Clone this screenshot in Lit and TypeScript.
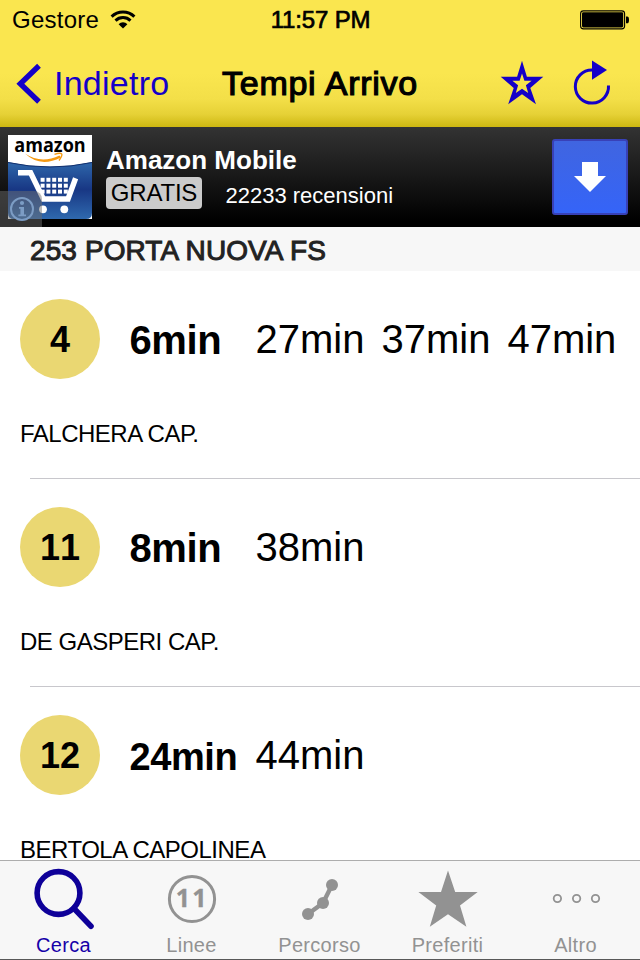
import { LitElement, html, css, svg } from "lit";
import { customElement, property } from "lit/decorators.js";
import { classMap } from "lit/directives/class-map.js";

interface Arrival {
  line: string;
  next: string;
  later: string[];
  destination: string;
}

const ARRIVALS: Arrival[] = [
  { line: "4", next: "6min", later: ["27min", "37min", "47min"], destination: "FALCHERA CAP." },
  { line: "11", next: "8min", later: ["38min"], destination: "DE GASPERI CAP." },
  { line: "12", next: "24min", later: ["44min"], destination: "BERTOLA CAPOLINEA" },
];

@customElement("status-bar")
class StatusBar extends LitElement {
  static styles = css`
    :host {
      display: grid;
      grid-template-columns: 1fr auto 1fr;
      align-items: center;
      height: 40px;
      padding: 0 11px 0 12px;
      font-size: 24px;
      line-height: 40px;
      white-space: nowrap;
    }
    .carrier { display: flex; align-items: center; gap: 10.5px; letter-spacing: 0.25px; }
    .time { -webkit-text-stroke: 0.7px #000; letter-spacing: -0.15px; }
    .battery { justify-self: end; display: block; }
    svg { display: block; }
  `;
  render() {
    return html`
      <div class="carrier">
        <span>Gestore</span>
        <svg width="26" height="20" viewBox="0 0 26 20">
          <g fill="none" stroke="#000" stroke-width="3">
            <path d="M1.6 6.6A16.3 16.3 0 0 1 24.4 6.6" />
            <path d="M5.5 10.6A10.8 10.8 0 0 1 20.5 10.6" />
          </g>
          <path d="M13 18.6L8.6 14.2A6.2 6.2 0 0 1 17.4 14.2Z" />
        </svg>
      </div>
      <div class="time">11:57 PM</div>
      <svg class="battery" width="49" height="20" viewBox="0 0 49 20">
        <rect x="0.6" y="0.9" width="44" height="18" rx="2.8" fill="none" stroke="#000" stroke-width="1.1" />
        <rect x="2" y="2.3" width="41.2" height="15.2" rx="1.4" />
        <path d="M46 6.5h1.2q1.8 0 1.8 3.4t-1.8 3.4H46z" />
      </svg>
    `;
  }
}

@customElement("nav-bar")
class NavBar extends LitElement {
  static styles = css`
    :host {
      display: grid;
      grid-template-columns: 1fr auto 1fr;
      align-items: center;
      height: 87px;
      padding: 0 28px 0 15px;
      font-size: 34px;
      line-height: 87px;
      white-space: nowrap;
    }
    .back { display: flex; align-items: center; gap: 11px; color: #1500c8; letter-spacing: 0.25px; }
    .title { -webkit-text-stroke: 1.2px #000; letter-spacing: 0.75px; padding-left: 13px; }
    .actions { display: flex; justify-content: flex-end; align-items: center; gap: 28px; padding-bottom: 2px; }
    svg { display: block; }
  `;
  render() {
    return html`
      <div class="back">
        <svg width="28" height="42" viewBox="15 62.5 28 42">
          <path d="M39 65.3L20.3 83.3L39 101.3" fill="none" stroke="#1500c8" stroke-width="5.4" />
        </svg>
        <span>Indietro</span>
      </div>
      <div class="title">Tempi Arrivo</div>
      <div class="actions">
        <svg width="44" height="46" viewBox="500 59.5 44 46">
          <path
            fill="#1500c8"
            fill-rule="evenodd"
            d="M522 60.3L526.9 76.3H543.3L530.3 87.4L536 103.8L522 93.7L508.2 103.8L513.7 87.4L500.7 76.3H517.1ZM522 73L519.6 80.2H512.4L518.1 84.8L515.8 92.4L522 88.2L528.2 92.4L525.9 84.8L531.6 80.2H524.4Z"
          />
        </svg>
        <svg width="40" height="46" viewBox="572 59.5 40 46">
          <path d="M608.5 85A16.6 16.6 0 1 1 592 69.4" fill="none" stroke="#1500c8" stroke-width="3" />
          <path d="M592 60L607 69.6L592 79.2Z" fill="#1500c8" />
        </svg>
      </div>
    `;
  }
}

@customElement("ad-banner")
class AdBanner extends LitElement {
  static styles = css`
    :host {
      position: relative;
      display: flex;
      height: 100px;
      padding: 0 12px 0 8px;
      box-sizing: border-box;
      color: #fff;
      background: linear-gradient(#333, #000 94%);
      white-space: nowrap;
    }
    svg { display: block; }
    .app-icon { margin-top: 8px; flex: none; overflow: visible; }
    .copy { flex: 1; padding: 18px 0 0 14px; }
    .name { font-weight: 700; font-size: 26px; line-height: 30px; margin-bottom: 2px; }
    .meta { display: flex; gap: 23.5px; }
    .price {
      width: 96px;
      height: 32px;
      border-radius: 4px;
      background: #cbcbcb;
      color: #000;
      font-size: 24px;
      line-height: 32px;
      letter-spacing: -0.2px;
      text-align: center;
    }
    .reviews { font-size: 22px; line-height: 37px; }
    .download {
      flex: none;
      width: 76px;
      height: 76px;
      margin-top: 12px;
      box-sizing: border-box;
      border: 2px solid #3841b8;
      border-radius: 3px;
      background: linear-gradient(#4065e0, #3564f8);
      display: flex;
      align-items: center;
      justify-content: center;
    }
    .info {
      position: absolute;
      left: 0;
      bottom: 0;
      width: 42px;
      height: 36px;
      border-top-right-radius: 8px;
      background: rgba(110, 110, 110, 0.48);
    }
  `;
  private cartDots() {
    const dots = [];
    for (let r = 0; r < 3; r++)
      for (let c = 0; c < 5; c++)
        dots.push(svg`<rect x=${32.6 + c * 5.8} y=${42.8 + r * 5.9} width="4" height="4" />`);
    return dots;
  }
  render() {
    return html`
      <svg class="app-icon" width="84" height="84" viewBox="0 0 84 84">
        <defs>
          <linearGradient id="blue" x1="0" y1="0" x2="0" y2="1">
            <stop offset="0" stop-color="#2e67ab" />
            <stop offset="0.48" stop-color="#183784" />
            <stop offset="1" stop-color="#2f69ae" />
          </linearGradient>
        </defs>
        <rect width="84" height="84" fill="#fff" />
        <path d="M0 27Q42 36 84 27V78Q84 84 78 84H6Q0 84 0 78Z" fill="url(#blue)" />
        <path d="M0 27.5Q42 36.5 84 27.5" fill="none" stroke="#12306e" stroke-width="1" />
        <text x="6.3" y="17.2" font-family="Open Sans, sans-serif" font-weight="700" font-size="20" textLength="71.4" lengthAdjust="spacingAndGlyphs" fill="#000">amazon</text>
        <path d="M17 18.6Q33 29.5 51.5 20.5L53 22.4Q32 33 17 18.6Z" fill="#f59a12" />
        <path d="M46.5 19.4Q52 17.5 53.5 18.8T51 25.5" fill="none" stroke="#f59a12" stroke-width="1.4" />
        <path d="M10 37.8H22.6L35.4 64H60L67.6 43.3" fill="none" stroke="#fff" stroke-width="5.4" />
        <g fill="#fff">${this.cartDots()}</g>
        <circle cx="35" cy="74.3" r="3.9" fill="#fff" />
        <circle cx="56.3" cy="74.3" r="3.9" fill="#fff" />
      </svg>
      <div class="copy">
        <div class="name">Amazon Mobile</div>
        <div class="meta">
          <div class="price">GRATIS</div>
          <div class="reviews">22233 recensioni</div>
        </div>
      </div>
      <div class="download">
        <svg width="32" height="30" viewBox="0 0 32 30">
          <path d="M8 0H24V14H32L16 30L0 14H8Z" fill="#fff" />
        </svg>
      </div>
      <div class="info">
        <svg width="42" height="36" viewBox="0 0 42 36">
          <circle cx="22" cy="18" r="11" fill="none" stroke="#7c9cc4" stroke-width="2" />
          <circle cx="22" cy="12" r="2.1" fill="#7c9cc4" />
          <path d="M19 16H24V23.5H26V25.2H18.4V23.5H20.4V17.7H19Z" fill="#7c9cc4" />
        </svg>
      </div>
    `;
  }
}

@customElement("arrival-row")
class ArrivalRow extends LitElement {
  @property({ attribute: false }) arrival!: Arrival;
  static styles = css`
    :host { display: block; flex: none; height: 208px; color: #000; }
    .times { display: flex; align-items: center; height: 80px; padding: 28px 0 0 20px; white-space: nowrap; line-height: 80px; }
    .badge {
      flex: none;
      width: 80px;
      height: 80px;
      border-radius: 50%;
      background: #ead772;
      font-weight: 700;
      font-size: 36px;
      line-height: 81px;
      font-kerning: none;
      text-align: center;
    }
    .next { flex: none; width: 126px; margin-left: 29.5px; padding-top: 2px; font-weight: 700; font-size: 40px; letter-spacing: -0.4px; }
    .next.long { font-size: 38px; padding-top: 4px; }
    .later { display: flex; gap: 17px; font-size: 40px; }
    .destination { padding: 40px 0 0 20px; font-size: 24px; line-height: 30px; letter-spacing: -0.5px; }
    .rule { margin: 29px 0 0 30px; height: 1px; background: #c8c7cc; }
  `;
  render() {
    const a = this.arrival;
    return html`
      <div class="times">
        <div class="badge">${a.line}</div>
        <div class=${classMap({ next: true, long: a.next.length > 4 })}>${a.next}</div>
        <div class="later">${a.later.map((t) => html`<span>${t}</span>`)}</div>
      </div>
      <div class="destination">${a.destination}</div>
      <div class="rule"></div>
    `;
  }
}

const TABS = [
  {
    label: "Cerca",
    icon: svg`<g fill="none" stroke="#0e0099" stroke-width="5.6">
      <circle cx="58.5" cy="893" r="21.4" />
      <path d="M73.8 908.3L91 926.2" stroke-linecap="round" /></g>`,
  },
  {
    label: "Linee",
    icon: svg`<circle cx="192" cy="899" r="22.6" fill="none" stroke="#929292" stroke-width="3" />
      <text x="175.8" y="906.8" font-family="Open Sans, sans-serif" font-weight="700" font-size="25" letter-spacing="2.2" fill="#929292" stroke="#929292" stroke-width="0.3">11</text>`,
  },
  {
    label: "Percorso",
    icon: svg`<path d="M308 914L323 903L332 885" fill="none" stroke="#929292" stroke-width="4.4" />
      <g fill="#929292"><circle cx="308" cy="914" r="6" /><circle cx="323" cy="903" r="6" /><circle cx="332" cy="885" r="6" /></g>`,
  },
  {
    label: "Preferiti",
    icon: svg`<path fill="#929292" d="M448 870.5L455.2 892H477.7L460 905.4L466.4 926.8L448 914.2L429.8 926.8L436.2 905.4L418.4 892H441Z" />`,
  },
  {
    label: "Altro",
    icon: svg`<g fill="none" stroke="#929292" stroke-width="1.8">
      <circle cx="557.4" cy="898.5" r="3.7" /><circle cx="576.6" cy="898.5" r="3.7" /><circle cx="595.5" cy="898.5" r="3.7" /></g>`,
  },
];

@customElement("tab-bar")
class TabBar extends LitElement {
  static styles = css`
    :host {
      position: relative;
      display: grid;
      grid-template-columns: repeat(5, 128px);
      flex: none;
      height: 100px;
      box-sizing: border-box;
      border-top: 1px solid #adadad;
      border-bottom: 1px solid #585858;
      background: #f7f7f7;
    }
    .tab { color: #929292; font-size: 20px; line-height: 24px; letter-spacing: 0.3px; text-align: center; }
    .tab.active { color: #1600a8; }
    svg { display: block; }
    .label { margin-right: 1px; }
  `;
  render() {
    return TABS.map(
      (t, i) => html`
        <div class=${classMap({ tab: true, active: i === 0 })}>
          <svg width="128" height="72" viewBox=${`${i * 128} 861 128 72`}>${t.icon}</svg>
          <div class="label">${t.label}</div>
        </div>
      `,
    );
  }
}

@customElement("app-root")
class AppRoot extends LitElement {
  static styles = css`
    :host {
      display: flex;
      flex-direction: column;
      width: 640px;
      height: 960px;
      overflow: hidden;
      background: #fff;
      color: #000;
      font-family: "Liberation Sans", Arial, sans-serif;
    }
    .top { flex: none; background: linear-gradient(#fae64f 0, #fae64f 58%, #f3df48 78%, #e6d136 90%, #cdb711 100%); }
    ad-banner { flex: none; }
    .stop {
      flex: none;
      height: 44px;
      box-sizing: border-box;
      padding: 3px 0 0 30px;
      background: #f7f7f7;
      color: #222;
      font-size: 28px;
      line-height: 42px;
      letter-spacing: 0.1px;
      -webkit-text-stroke: 1px #222;
      white-space: nowrap;
    }
    .list { flex: 1; min-height: 0; display: flex; flex-direction: column; }
  `;
  render() {
    return html`
      <div class="top">
        <status-bar></status-bar>
        <nav-bar></nav-bar>
      </div>
      <ad-banner></ad-banner>
      <div class="stop">253 PORTA NUOVA FS</div>
      <div class="list">${ARRIVALS.map((a) => html`<arrival-row .arrival=${a}></arrival-row>`)}</div>
      <tab-bar></tab-bar>
    `;
  }
}
